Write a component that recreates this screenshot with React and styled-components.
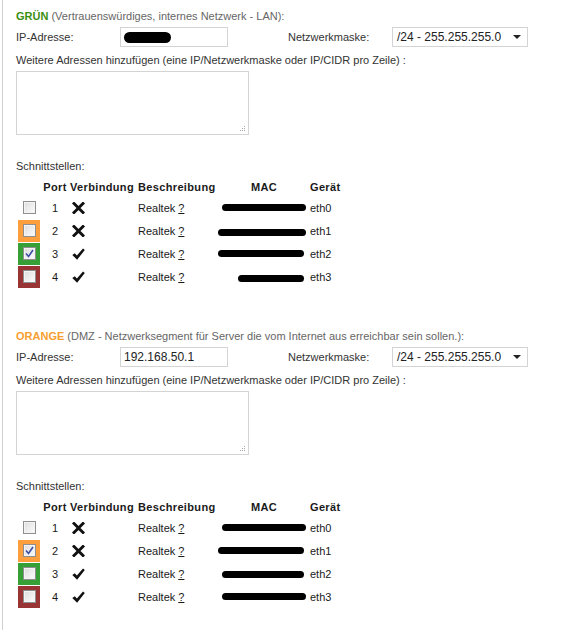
import React from 'react';
import styled, { createGlobalStyle } from 'styled-components';

const GlobalStyle = createGlobalStyle`
    html, body {
        margin: 0;
        padding: 0;
        background: #fff;
    }
    body {
        font-family: "Liberation Sans", Arial, sans-serif;
        font-size: 11px;
        color: #333;
    }
`;

const cellColors = {
    orange: '#fd9f3d',
    green: '#36a036',
    red: '#993434',
};

const zones = [
    {
        name: 'GRÜN',
        color: '#3a8f10',
        info: '(Vertrauenswürdiges, internes Netzwerk - LAN):',
        ip: null,
        ports: [
            { port: 1, up: false, checked: false, dev: 'eth0', mac: [4, 84, 0] },
            { port: 2, up: false, checked: false, dev: 'eth1', mac: [0, 88, 2], zone: 'orange' },
            { port: 3, up: true, checked: true, dev: 'eth2', mac: [0, 86, 0], zone: 'green' },
            { port: 4, up: true, checked: false, dev: 'eth3', mac: [20, 66, 2], zone: 'red' },
        ],
    },
    {
        name: 'ORANGE',
        color: '#f7a030',
        info: '(DMZ - Netzwerksegment für Server die vom Internet aus erreichbar sein sollen.):',
        ip: '192.168.50.1',
        ports: [
            { port: 1, up: false, checked: false, dev: 'eth0', mac: [4, 84, 0] },
            { port: 2, up: false, checked: true, dev: 'eth1', mac: [0, 86, 0], zone: 'orange' },
            { port: 3, up: true, checked: false, dev: 'eth2', mac: [4, 82, 1], zone: 'green' },
            { port: 4, up: true, checked: false, dev: 'eth3', mac: [4, 84, 0], zone: 'red' },
        ],
    },
];

const Page = styled.div`
    margin-left: 2px;
    border-left: 1px solid #cfcfcf;
    min-height: 630px;
    padding-left: 13px;
    box-sizing: border-box;
`;

const Section = styled.section`
    padding: 8px 0 32px;
`;

const Title = styled.div`
    line-height: 16px;
    height: 16px;
    color: #666;
    b {
        color: ${(p) => p.$color};
    }
`;

const FieldRow = styled.div`
    display: grid;
    grid-template-columns: 104px 108px 60px 104px 136px;
    align-items: center;
    margin-top: 3px;
    height: 20px;
`;

const Label = styled.span`
    color: #333;
`;

const TextInput = styled.div`
    height: 20px;
    box-sizing: border-box;
    border: 1px solid #d4d4d4;
    padding: 0 3px;
    display: flex;
    align-items: center;
    font-size: 12px;
    color: #222;
`;

const Redact = styled.span`
    display: inline-block;
    background: #000;
    width: ${(p) => p.$w}px;
    height: ${(p) => p.$h}px;
    border-radius: ${(p) => p.$h / 2}px;
    margin-left: ${(p) => p.$l || 0}px;
    transform: translateY(${(p) => p.$y || 0}px);
`;

const Select = styled.div`
    grid-column: 5;
    height: 20px;
    box-sizing: border-box;
    border: 1px solid #d4d4d4;
    display: flex;
    align-items: center;
    justify-content: space-between;
    padding: 0 6px 0 4px;
    font-size: 12px;
    color: #222;
    &::after {
        content: '';
        border-left: 4px solid transparent;
        border-right: 4px solid transparent;
        border-top: 4px solid #222;
    }
`;

const Line = styled.div`
    line-height: 14px;
    margin-top: ${(p) => p.$top}px;
    color: #333;
`;

const AreaWrap = styled.div`
    position: relative;
    width: 233px;
    height: 64px;
    margin-top: 4px;
    border: 1px solid #d4d4d4;
    box-sizing: border-box;
`;

const Grip = styled.svg`
    position: absolute;
    right: 2px;
    bottom: 2px;
`;

const Table = styled.div`
    margin: 4px 0 0 2px;
`;

const Row = styled.div`
    display: grid;
    grid-template-columns: 22px 30px 68px 80px 92px auto;
    align-items: center;
    height: ${(p) => (p.$head ? 19 : 23)}px;
    font-weight: ${(p) => (p.$head ? 'bold' : 'normal')};
    letter-spacing: ${(p) => (p.$head ? '0.35px' : 'normal')};
    color: #1a1a1a;
`;

const Centered = styled.span`
    text-align: center;
`;

const IconCell = styled.span`
    padding-left: 2px;
    display: flex;
    align-items: center;
`;

const CheckCell = styled.div`
    width: 22px;
    height: 22px;
    background: ${(p) => (p.$zone ? cellColors[p.$zone] : 'transparent')};
    display: flex;
    align-items: center;
    justify-content: center;
`;

const CheckBox = styled.span`
    width: 13px;
    height: 13px;
    box-sizing: border-box;
    border: 1px solid #8e8f8f;
    background: linear-gradient(135deg, #dcdcdc 0%, #f0f0f0 60%, #fdfdfd 100%);
    box-shadow: inset 0 0 0 1px #f4f4f4;
    display: flex;
    align-items: center;
    justify-content: center;
`;

const Help = styled.span`
    text-decoration: underline;
    margin-left: 3px;
`;

const MacCell = styled.div`
    display: flex;
    align-items: center;
`;

const Cross = () => (
    <svg width="13" height="12" viewBox="0 0 13 12">
        <path d="M2 1.5 L11 10.5 M11 1.5 L2 10.5" stroke="#111" strokeWidth="2.9" strokeLinecap="square" />
    </svg>
);

const Tick = () => (
    <svg width="13" height="12" viewBox="0 0 13 12">
        <path d="M0.3 7 L2.8 5.2 L4.9 7.6 L11 0.4 L12.8 1.9 L5.1 11.8 Z" fill="#111" />
    </svg>
);

const BlueCheck = () => (
    <svg width="9" height="9" viewBox="0 0 9 9">
        <path d="M1 4.5 L3.5 7.5 L8 1" stroke="#3c4fa6" strokeWidth="1.6" fill="none" />
    </svg>
);

function ZoneSection({ zone }) {
    return (
        <Section>
            <Title $color={zone.color}>
                <b>{zone.name}</b> {zone.info}
            </Title>
            <FieldRow>
                <Label>IP-Adresse:</Label>
                <TextInput>
                    {zone.ip ? zone.ip : <Redact $w={47} $h={11} />}
                </TextInput>
                <span />
                <Label>Netzwerkmaske:</Label>
                <Select>/24 - 255.255.255.0</Select>
            </FieldRow>
            <Line $top={6}>Weitere Adressen hinzufügen (eine IP/Netzwerkmaske oder IP/CIDR pro Zeile) :</Line>
            <AreaWrap>
                <Grip width="7" height="7" viewBox="0 0 7 7">
                    <rect x="5" y="1" width="1" height="1" fill="#aaa" />
                    <rect x="3" y="3" width="1" height="1" fill="#aaa" />
                    <rect x="5" y="3" width="1" height="1" fill="#aaa" />
                    <rect x="1" y="5" width="1" height="1" fill="#aaa" />
                    <rect x="3" y="5" width="1" height="1" fill="#aaa" />
                    <rect x="5" y="5" width="1" height="1" fill="#aaa" />
                </Grip>
            </AreaWrap>
            <Line $top={24}>Schnittstellen:</Line>
            <Table>
                <Row $head>
                    <span />
                    <Centered>Port</Centered>
                    <span>Verbindung</span>
                    <span>Beschreibung</span>
                    <Centered>MAC</Centered>
                    <span>Gerät</span>
                </Row>
                {zone.ports.map((p) => (
                    <Row key={p.port}>
                        <CheckCell $zone={p.zone}>
                            <CheckBox>{p.checked && <BlueCheck />}</CheckBox>
                        </CheckCell>
                        <Centered>{p.port}</Centered>
                        <IconCell>{p.up ? <Tick /> : <Cross />}</IconCell>
                        <span>
                            Realtek<Help>?</Help>
                        </span>
                        <MacCell>
                            <Redact $l={p.mac[0]} $w={p.mac[1]} $h={7} $y={p.mac[2]} />
                        </MacCell>
                        <span>{p.dev}</span>
                    </Row>
                ))}
            </Table>
        </Section>
    );
}

export default function App() {
    return (
        <>
            <GlobalStyle />
            <Page>
                {zones.map((z) => (
                    <ZoneSection key={z.name} zone={z} />
                ))}
            </Page>
        </>
    );
}
